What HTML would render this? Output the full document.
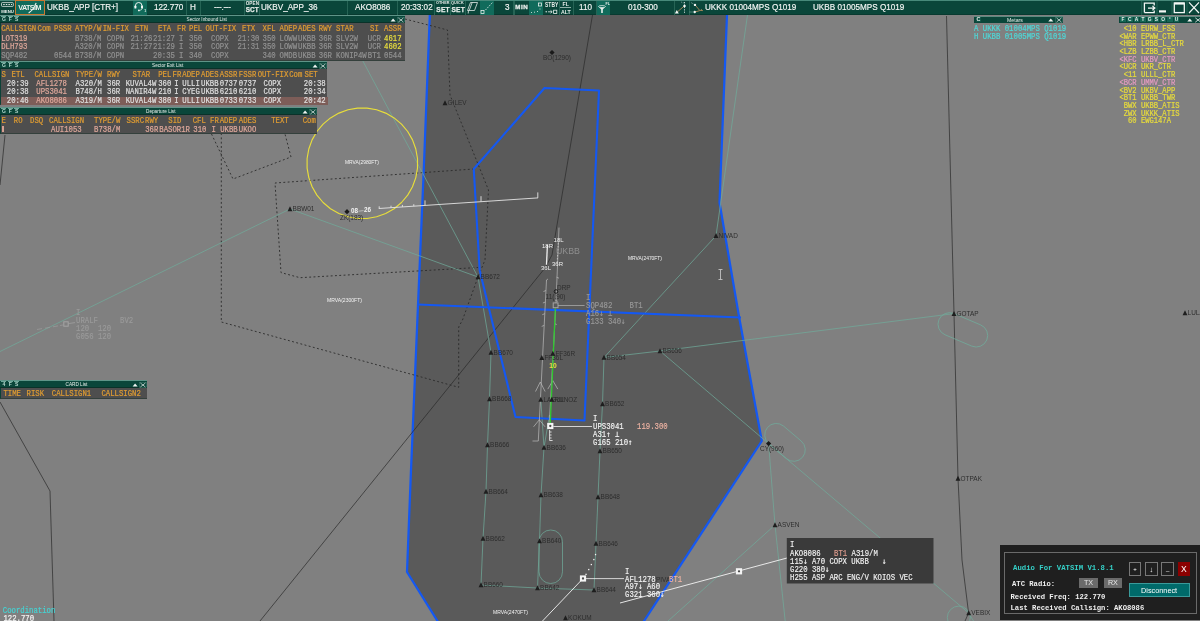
<!DOCTYPE html><html><head><meta charset="utf-8"><title>UKBB_APP radar</title><style>

html,body{margin:0;padding:0}
body{width:1200px;height:621px;overflow:hidden;position:relative;background:#808080;font-family:"Liberation Sans",Arial,sans-serif}
#root{position:absolute;left:0;top:0;width:1200px;height:621px;overflow:hidden;will-change:transform}
#map{position:absolute;left:0;top:0}
.abs{position:absolute}
.mono{font-family:"Liberation Mono","DejaVu Sans Mono",monospace;font-weight:normal;-webkit-text-stroke:.2px;font-size:7.3px;line-height:8px;white-space:pre;transform:scaleY(1.15);transform-origin:0 50%}
#top{position:absolute;left:0;top:0;width:1200px;height:15px;background:#0a463a;border-top:1px solid #47897a;box-sizing:border-box;border-bottom:1px solid #083a30}
#top .t{position:absolute;top:-.1px;height:12px;line-height:12px;color:#f2f5f3;font-size:9.8px;white-space:pre;transform-origin:0 50%;transform:scaleX(.83);-webkit-text-stroke:.2px #f2f5f3}
#top .sep{position:absolute;top:0;width:1.3px;height:14px;background:#266455}
#top .box{position:absolute;top:0;height:14px;background:#116b5b}
#top .sm{position:absolute;color:#e6ece9;font-weight:bold;font-size:5px;line-height:5px;white-space:pre}
.list{position:absolute;background:#4e4e4e;border-left:1px solid #0c4237;border-bottom:1.2px solid #34403c;box-sizing:border-box}
.list .tb{position:absolute;left:-1px;top:-1px;right:0;height:8px;background:#0a463a;border-top:1.6px solid #5f9488;border-bottom:1px solid #0a3229;box-sizing:border-box}
.list .ttl{position:absolute;top:.6px;height:6px;line-height:6px;font-size:4.7px;color:#e8eeea;white-space:pre}
.list .c{position:absolute;height:8px}
.hd{color:#df9c32}
.pk{color:#dda79a}
.gy{color:#909090}
.wh{color:#dedede}
.yl{color:#e6dc3e}

</style></head><body><div id="root">
<svg id="map" width="1200" height="621" viewBox="0 0 1200 621">
<rect width="1200" height="621" fill="#808080"/>
<polygon points="430,10 423.75,170 418,305 411,470 407,572 437.5,621 440,630 640,630 644,621 761.8,441 738.75,315 719.5,202.5 727.2,10" fill="#5a5a5a" stroke="#1458f2" stroke-width="2.25" stroke-linejoin="round"/>
<polyline points="405,19 447.5,30 450,95 480,169 488.5,190 485,260 478,277 462.5,320 458.7,327 458.7,387.3 221.3,322 221.3,134" fill="none" stroke="#2a2a2a" stroke-width="0.9" stroke-dasharray="1.9 2.4"/>
<polyline points="474,169 275,183 281,272.6 300,277.7 478,267.5" fill="none" stroke="#2a2a2a" stroke-width="0.9" stroke-dasharray="1.9 2.4"/>
<polyline points="211.5,134 233,179 291,157 285,134" fill="none" stroke="#2a2a2a" stroke-width="0.9" stroke-dasharray="1.9 2.4"/>
<polyline points="592.5,15 557,225 552,255 545,268 260,621" fill="none" stroke="#2a2a2a" stroke-width="0.7"/>
<polyline points="946.5,16 954,313.6 958,478.5 962,560 968.6,613 964.6,622" fill="none" stroke="#2a2a2a" stroke-width="0.7"/>
<polyline points="5,135 0,185" fill="none" stroke="#2a2a2a" stroke-width="0.7"/>
<polyline points="0,402 50,491 54,621" fill="none" stroke="#2a2a2a" stroke-width="0.7"/>
<polyline points="0,351.5 290,209 478,277" fill="none" stroke="#70ab9b" stroke-width="0.72"/>
<polyline points="341,20 478,277" fill="none" stroke="#70ab9b" stroke-width="0.72"/>
<polyline points="478,277 491,352.5 489.5,399 487.5,445 486,491.5 483,538.5 481,585 537.5,588 594,590 596,543.5 598,497 600,451 602.5,404 604,357.5 660,351" fill="none" stroke="#70ab9b" stroke-width="0.72"/>
<polyline points="537.5,588 539.5,541 541,495 544,447.5 540.8,399.5" fill="none" stroke="#70ab9b" stroke-width="0.72"/>
<polyline points="544,447.5 549.5,415" fill="none" stroke="#70ab9b" stroke-width="0.72"/>
<polyline points="747.5,15 716,235.8 604,357.5" fill="none" stroke="#70ab9b" stroke-width="0.72"/>
<polyline points="954,313.6 660,351 768.6,443.6" fill="none" stroke="#70ab9b" stroke-width="0.72"/>
<polyline points="768.6,443.6 775,525 785.3,622" fill="none" stroke="#70ab9b" stroke-width="0.72"/>
<polyline points="775,525 664.7,624" fill="none" stroke="#70ab9b" stroke-width="0.72"/>
<polyline points="768.6,443.6 968.7,613" fill="none" stroke="#70ab9b" stroke-width="0.72"/>
<rect x="539" y="530" width="23.5" height="53.5" rx="11.7" fill="none" stroke="#70ab9b" stroke-width="0.72"/>
<rect x="-11.5" y="0" width="52" height="23" rx="11.5" fill="none" stroke="#70ab9b" stroke-width="0.72" transform="translate(954,313.6) rotate(23)"/>
<rect x="-11.5" y="-23" width="46" height="23" rx="11.5" fill="none" stroke="#70ab9b" stroke-width="0.72" transform="translate(768.8,443.7) rotate(40.3)"/>
<circle cx="958.8" cy="617.6" r="11.5" fill="none" stroke="#70ab9b" stroke-width="0.72"/>
<line x1="968.6" y1="613" x2="973.5" y2="621" stroke="#70ab9b" stroke-width="0.72"/>
<polyline points="418,304.5 741,317.5" fill="none" stroke="#1458f2" stroke-width="2.1"/>
<polygon points="544.5,88 599,90.5 584.5,420.5 515.5,417 479.7,270.5 473.75,169" fill="none" stroke="#1458f2" stroke-width="2.1" stroke-linejoin="round"/>
<polygon points="417.5,168.1 415.8,177.6 412.5,186.7 407.7,195.1 401.5,202.5 394.1,208.7 385.7,213.5 376.6,216.8 367.1,218.5 357.5,218.5 348.0,216.8 338.9,213.5 330.5,208.7 323.1,202.5 316.9,195.1 312.1,186.7 308.8,177.6 307.1,168.1 307.1,158.5 308.8,149.0 312.1,139.9 316.9,131.5 323.1,124.1 330.5,117.9 338.9,113.1 348.0,109.8 357.5,108.1 367.1,108.1 376.6,109.8 385.7,113.1 394.1,117.9 401.5,124.1 407.7,131.5 412.5,139.9 415.8,149.0 417.5,158.5" fill="none" stroke="#e8de3a" stroke-width="1.15" stroke-linejoin="round"/>
<line x1="358.5" y1="211.2" x2="363.5" y2="210.6" stroke="#b8b8b8" stroke-width="1"/>
<g stroke="#e4e4e4" stroke-width="0.9" fill="none">
<polyline points="378.8,208.5 538,197.9"/>
<line x1="379.2" y1="208.5" x2="379.2" y2="206.3"/>
<line x1="391" y1="207.7" x2="391" y2="205.7"/>
<line x1="402.4" y1="206.9" x2="402.4" y2="204.9"/>
<line x1="413.8" y1="206.2" x2="413.8" y2="204.2"/>
<line x1="425" y1="205.4" x2="425" y2="200.4"/>
<line x1="481" y1="201.7" x2="481" y2="196.2"/>
<line x1="537.8" y1="197.9" x2="537.8" y2="192.4"/>
</g>
<g stroke="#bcbcbc" stroke-width="0.7" fill="none">
<polyline points="559,227.6 556,303"/>
<polyline points="555.6,310 549.3,422.7"/>
<polyline points="548,279 546.5,280 538.3,441 532.5,441"/>
<line x1="546.0" y1="290.5" x2="543.5" y2="291.5"/>
<line x1="545.4" y1="302" x2="542.9" y2="303"/>
<line x1="544.8" y1="313.7" x2="542.3" y2="314.7"/>
<line x1="544.2" y1="325.4" x2="541.7" y2="326.4"/>
<line x1="556.5" y1="277.2" x2="559.0" y2="278.2"/>
<line x1="555.4" y1="300.4" x2="557.9" y2="301.4"/>
<line x1="554.2" y1="323.5" x2="556.7" y2="324.5"/>
<polyline points="535.5,391.5 540.3,382 545.0999999999999,391.5"/>
<polyline points="547.8,389.1 552.8,380.6 557.8,389.1"/>
<polyline points="533.55,426.8 539.3,419.8 545.05,426.8"/>
</g>
<line x1="547.4" y1="245" x2="546.5" y2="264.8" stroke="#f0f0f0" stroke-width="1.3"/>
<line x1="558.3" y1="243" x2="557.2" y2="262" stroke="#d0d0d0" stroke-width="0.8" stroke-dasharray="1.5 1.5"/>
<line x1="555.3" y1="308.5" x2="550.3" y2="423" stroke="#2fc82f" stroke-width="1.3"/>
<g font-family="Liberation Sans, Arial, sans-serif" font-size="6.45" fill="#2d2d2d">
<polygon points="475.55,279.3 478,274.3 480.45,279.3" fill="#1e1e1e"/>
<text x="480.6" y="279.4">BB672</text>
<polygon points="488.55,354.8 491,349.8 493.45,354.8" fill="#1e1e1e"/>
<text x="493.6" y="354.9">BB670</text>
<polygon points="487.05,401.3 489.5,396.3 491.95,401.3" fill="#1e1e1e"/>
<text x="492.1" y="401.4">BB668</text>
<polygon points="485.05,447.3 487.5,442.3 489.95,447.3" fill="#1e1e1e"/>
<text x="490.1" y="447.4">BB666</text>
<polygon points="483.55,493.8 486,488.8 488.45,493.8" fill="#1e1e1e"/>
<text x="488.6" y="493.9">BB664</text>
<polygon points="480.55,540.8 483,535.8 485.45,540.8" fill="#1e1e1e"/>
<text x="485.6" y="540.9">BB662</text>
<polygon points="478.55,587.3 481,582.3 483.45,587.3" fill="#1e1e1e"/>
<text x="483.6" y="587.4">BB660</text>
<polygon points="535.05,590.3 537.5,585.3 539.95,590.3" fill="#1e1e1e"/>
<text x="540.1" y="590.4">BB642</text>
<polygon points="591.55,592.3 594,587.3 596.45,592.3" fill="#1e1e1e"/>
<text x="596.6" y="592.4">BB644</text>
<polygon points="593.55,545.8 596,540.8 598.45,545.8" fill="#1e1e1e"/>
<text x="598.6" y="545.9">BB646</text>
<polygon points="595.55,499.3 598,494.3 600.45,499.3" fill="#1e1e1e"/>
<text x="600.6" y="499.4">BB648</text>
<polygon points="597.55,453.3 600,448.3 602.45,453.3" fill="#1e1e1e"/>
<text x="602.6" y="453.4">BB650</text>
<polygon points="600.05,406.3 602.5,401.3 604.95,406.3" fill="#1e1e1e"/>
<text x="605.1" y="406.4">BB652</text>
<polygon points="601.55,359.8 604,354.8 606.45,359.8" fill="#1e1e1e"/>
<text x="606.6" y="359.9">BB654</text>
<polygon points="657.55,353.3 660,348.3 662.45,353.3" fill="#1e1e1e"/>
<text x="662.6" y="353.4">BB656</text>
<polygon points="537.05,543.3 539.5,538.3 541.95,543.3" fill="#1e1e1e"/>
<text x="542.1" y="543.4">BB640</text>
<polygon points="538.55,497.3 541,492.3 543.45,497.3" fill="#1e1e1e"/>
<text x="543.6" y="497.4">BB638</text>
<polygon points="541.55,449.8 544,444.8 546.45,449.8" fill="#1e1e1e"/>
<text x="546.6" y="449.9">BB636</text>
<polygon points="539.3499999999999,359.90000000000003 541.8,354.90000000000003 544.25,359.90000000000003" fill="#1e1e1e"/>
<text x="544.4" y="360.0">FF36L</text>
<polygon points="550.3499999999999,355.8 552.8,350.8 555.25,355.8" fill="#1e1e1e"/>
<text x="555.4" y="355.9">FF36R</text>
<polygon points="538.3499999999999,401.8 540.8,396.8 543.25,401.8" fill="#1e1e1e"/>
<text x="543.4" y="401.9">LAGUL</text>
<polygon points="549.3499999999999,401.8 551.8,396.8 554.25,401.8" fill="#1e1e1e"/>
<text x="554.4" y="401.9">RUNOZ</text>
<polygon points="563.05,620.3 565.5,615.3 567.95,620.3" fill="#1e1e1e"/>
<text x="568.1" y="620.4">KOKUM</text>
<polygon points="442.55,105.3 445,100.3 447.45,105.3" fill="#1e1e1e"/>
<text x="447.6" y="105.4">GILEV</text>
<polygon points="713.55,238.10000000000002 716,233.10000000000002 718.45,238.10000000000002" fill="#1e1e1e"/>
<text x="718.6" y="238.20000000000002">NIVAD</text>
<polygon points="287.55,211.3 290,206.3 292.45,211.3" fill="#1e1e1e"/>
<text x="292.6" y="211.4">BBW01</text>
<polygon points="951.55,315.90000000000003 954,310.90000000000003 956.45,315.90000000000003" fill="#1e1e1e"/>
<text x="956.6" y="316.0">GOTAP</text>
<polygon points="955.55,480.8 958,475.8 960.45,480.8" fill="#1e1e1e"/>
<text x="960.6" y="480.9">OTPAK</text>
<polygon points="772.55,527.3 775,522.3 777.45,527.3" fill="#1e1e1e"/>
<text x="777.6" y="527.4">ASVEN</text>
<polygon points="966.25,615.3 968.7,610.3 971.1500000000001,615.3" fill="#1e1e1e"/>
<text x="971.3000000000001" y="615.4">VEBIX</text>
<polygon points="1182.55,315.3 1185,310.3 1187.45,315.3" fill="#1e1e1e"/>
<text x="1187.6" y="315.4">LULA</text>
<polygon points="549.4,52.5 552,49.9 554.6,52.5 552,55.1" fill="#1a1a1a"/>
<text x="543" y="59.7">BO(1290)</text>
<polygon points="766.0,443.6 768.6,441.0 771.2,443.6 768.6,446.20000000000005" fill="#1a1a1a"/>
<text x="760" y="450.5">CY(960)</text>
<polygon points="344.4,211.7 347,209.1 349.6,211.7 347,214.29999999999998" fill="#1a1a1a"/>
<text x="340" y="219.5">ZK(183)</text>
<text x="557" y="290.3">DRP</text><text x="545.6" y="299">11(.90)</text>
<text x="656" y="582.3">PIVA</text>
<circle cx="556" cy="291.5" r="1.8" fill="none" stroke="#1e1e1e" stroke-width="1"/>
</g>
<g font-family="Liberation Sans, Arial, sans-serif" fill="#f2f2f2">
<text x="345" y="164" font-size="5" textLength="34" lengthAdjust="spacingAndGlyphs">MRVA(2980FT)</text>
<text x="327" y="302" font-size="5" textLength="35" lengthAdjust="spacingAndGlyphs">MRVA(2300FT)</text>
<text x="628" y="260" font-size="5" textLength="34" lengthAdjust="spacingAndGlyphs">MRVA(2470FT)</text>
<text x="493" y="614" font-size="5" textLength="35" lengthAdjust="spacingAndGlyphs">MRVA(2470FT)</text>
<text x="553.6" y="242.2" font-size="6">18L</text><text x="542" y="247.9" font-size="6">18R</text>
<text x="552" y="266.2" font-size="6">36R</text><text x="541" y="269.7" font-size="6">36L</text>
<text x="351" y="213.3" font-size="6.3" font-weight="bold">08</text><text x="364" y="212.3" font-size="6.3" font-weight="bold">26</text>
</g>
<text x="556" y="254.3" font-family="Liberation Sans, Arial, sans-serif" font-size="9" fill="#8f8f8f" textLength="24" lengthAdjust="spacingAndGlyphs">UKBB</text>
<text x="549.3" y="367.8" font-family="Liberation Sans, Arial, sans-serif" font-size="7" font-weight="bold" fill="#e8e040" textLength="7.4" lengthAdjust="spacingAndGlyphs">10</text>
<g stroke="#c2c2c2" stroke-width="0.9"><line x1="720.5" y1="269.5" x2="720.5" y2="279.5"/><line x1="718.5" y1="269.5" x2="722.5" y2="269.5"/><line x1="718.5" y1="279.5" x2="722.5" y2="279.5"/></g>
<g font-family="Liberation Mono, DejaVu Sans Mono, monospace" font-weight="normal" font-size="7.3" stroke-width=".13" style="white-space:pre">
<rect x="553.2" y="302.90000000000003" width="4.8" height="4.8" fill="none" stroke="#a4a4a4" stroke-width="1"/>
<line x1="558" y1="305.5" x2="584.6" y2="305.5" stroke="#a8a8a8" stroke-width="0.8"/>
<text xml:space="preserve" transform="translate(586,297) scale(1,1.15)" y="2.52" fill="#989898" stroke="#989898">I</text>
<text xml:space="preserve" transform="translate(586,305.5) scale(1,1.15)" y="2.52" fill="#989898" stroke="#989898">SQP482</text>
<text xml:space="preserve" transform="translate(586,313) scale(1,1.15)" y="2.52" fill="#989898" stroke="#989898">A16<tspan font-family="DejaVu Sans Mono">↓</tspan> ⊥</text>
<text xml:space="preserve" transform="translate(586,320.6) scale(1,1.15)" y="2.52" fill="#989898" stroke="#989898">G133 340<tspan font-family="DejaVu Sans Mono">↓</tspan></text>
<text transform="translate(629.5,305.5) scale(1,1.15)" y="2.52" fill="#989898" stroke="#989898">BT1</text>
<rect x="547.1999999999999" y="422.9" width="6.2" height="6.2" fill="#f4f4f4"/><circle cx="550.3" cy="426" r="1.15" fill="#4a4a4a"/>
<line x1="553.3" y1="426.5" x2="592" y2="426.5" stroke="#f4f4f4" stroke-width="0.8"/>
<path d="M549.6 430 V440.5 M549.6 432 h2 M549.6 435 h2 M549.6 438 h2 M549.6 440.5 h3" stroke="#f4f4f4" stroke-width="0.8" fill="none"/>
<text xml:space="preserve" transform="translate(593,418) scale(1,1.15)" y="2.52" fill="#f4f4f4" stroke="#f4f4f4">I</text>
<text xml:space="preserve" transform="translate(593,426) scale(1,1.15)" y="2.52" fill="#f4f4f4" stroke="#f4f4f4">UPS3041</text>
<text xml:space="preserve" transform="translate(593,434) scale(1,1.15)" y="2.52" fill="#f4f4f4" stroke="#f4f4f4">A31<tspan font-family="DejaVu Sans Mono">↑</tspan> ⊥</text>
<text xml:space="preserve" transform="translate(593,442) scale(1,1.15)" y="2.52" fill="#f4f4f4" stroke="#f4f4f4">G165 210<tspan font-family="DejaVu Sans Mono">↑</tspan></text>
<text transform="translate(637,426) scale(1,1.15)" y="2.52" fill="#f0b4a4" stroke="#f0b4a4">119.300</text>
<line x1="583" y1="578.5" x2="542.5" y2="621" stroke="#f4f4f4" stroke-width="0.9"/>
<rect x="579.9" y="575.4" width="6.2" height="6.2" fill="#f4f4f4"/><circle cx="583" cy="578.5" r="1.15" fill="#4a4a4a"/>
<line x1="586" y1="578.6" x2="624" y2="578.6" stroke="#f4f4f4" stroke-width="0.8"/>
<rect x="585.4" y="573.6999999999999" width="1.3" height="1.3" fill="#f4f4f4"/>
<rect x="588.1" y="568.9" width="1.3" height="1.3" fill="#f4f4f4"/>
<rect x="590.6999999999999" y="563.9" width="1.3" height="1.3" fill="#f4f4f4"/>
<rect x="593.1999999999999" y="558.9" width="1.3" height="1.3" fill="#f4f4f4"/>
<rect x="594.9" y="553.9" width="1.3" height="1.3" fill="#f4f4f4"/>
<text xml:space="preserve" transform="translate(625,570.6) scale(1,1.15)" y="2.52" fill="#f4f4f4" stroke="#f4f4f4">I</text>
<text xml:space="preserve" transform="translate(625,579) scale(1,1.15)" y="2.52" fill="#f4f4f4" stroke="#f4f4f4">AFL1278</text>
<text xml:space="preserve" transform="translate(625,586) scale(1,1.15)" y="2.52" fill="#f4f4f4" stroke="#f4f4f4">A97<tspan font-family="DejaVu Sans Mono">↓</tspan> A60</text>
<text xml:space="preserve" transform="translate(625,594) scale(1,1.15)" y="2.52" fill="#f4f4f4" stroke="#f4f4f4">G321 360<tspan font-family="DejaVu Sans Mono">↓</tspan></text>
<text transform="translate(669,579) scale(1,1.15)" y="2.52" fill="#f0b4a4" stroke="#f0b4a4">BT1</text>
<line x1="620" y1="603" x2="787" y2="558" stroke="#f4f4f4" stroke-width="0.9"/>
<rect x="735.9" y="568.1999999999999" width="6.2" height="6.2" fill="#f4f4f4"/><circle cx="739" cy="571.3" r="1.15" fill="#4a4a4a"/>
<rect x="786.8" y="538" width="146.7" height="45.5" fill="#3a3a3a"/>
<text xml:space="preserve" transform="translate(790,544.5) scale(1,1.15)" y="2.52" fill="#f4f4f4" stroke="#f4f4f4">I</text>
<text xml:space="preserve" transform="translate(790,553) scale(1,1.15)" y="2.52" fill="#f4f4f4" stroke="#f4f4f4">AKO8086</text>
<text xml:space="preserve" transform="translate(790,561) scale(1,1.15)" y="2.52" fill="#f4f4f4" stroke="#f4f4f4">115<tspan font-family="DejaVu Sans Mono">↓</tspan> A70 COPX UKBB   <tspan font-family="DejaVu Sans Mono">↓</tspan></text>
<text xml:space="preserve" transform="translate(790,569) scale(1,1.15)" y="2.52" fill="#f4f4f4" stroke="#f4f4f4">G220 380<tspan font-family="DejaVu Sans Mono">↓</tspan></text>
<text xml:space="preserve" transform="translate(790,577) scale(1,1.15)" y="2.52" fill="#f4f4f4" stroke="#f4f4f4">H255 ASP ARC ENG/V KOIOS VEC</text>
<text transform="translate(834,553) scale(1,1.15)" y="2.52" fill="#e09e90" stroke="#e09e90">BT1</text>
<text transform="translate(851.5,553) scale(1,1.15)" y="2.52" fill="#f4f4f4" stroke="#f4f4f4">A319/M</text>
<rect x="63.8" y="321.8" width="4.4" height="4.4" fill="none" stroke="#a4a4a4" stroke-width="1"/>
<line x1="68.5" y1="323.6" x2="75" y2="322.6" stroke="#a4a4a4" stroke-width="0.7"/>
<path d="M37 329.5 l5 -0.9 M45 328.2 l5 -0.9 M53 326.8 l5 -0.9 M60 325.5 l3 -0.5" stroke="#9c9c9c" stroke-width="0.7"/>
<text xml:space="preserve" transform="translate(76,312) scale(1,1.15)" y="2.52" fill="#9a9a9a" stroke="#9a9a9a">I</text>
<text xml:space="preserve" transform="translate(76,320) scale(1,1.15)" y="2.52" fill="#9a9a9a" stroke="#9a9a9a">URALF</text>
<text xml:space="preserve" transform="translate(76,328) scale(1,1.15)" y="2.52" fill="#9a9a9a" stroke="#9a9a9a">120  120</text>
<text xml:space="preserve" transform="translate(76,336) scale(1,1.15)" y="2.52" fill="#9a9a9a" stroke="#9a9a9a">G056 120</text>
<text transform="translate(120,320) scale(1,1.15)" y="2.52" fill="#9a9a9a" stroke="#9a9a9a">BV2</text>
</g></svg>
<div id="top">
<svg class="abs" style="left:0;top:0" width="16" height="14" viewBox="0 0 16 14"><rect x="1.5" y="1.6" width="11.8" height="3.8" rx=".8" fill="none" stroke="#dfe8e4" stroke-width="0.8"/><path d="M3.2 3.5h1.5M5.8 3.5h1.5M8.4 3.5h1.5M11 3.5h1" stroke="#dfe8e4" stroke-width="1.1"/></svg>
<span class="sm" style="left:1.2px;top:8.5px;font-size:4.3px;line-height:4.3px;letter-spacing:0px">MENU</span>
<span class="box" style="left:15px;width:30px;border:1px solid #c87832;box-sizing:border-box;height:15.2px;top:-1px"></span>
<span class="abs" style="left:18.2px;top:1.5px;height:10px;line-height:10px;color:#eef3f0;font-size:7.2px;font-weight:bold;letter-spacing:-.55px;white-space:pre">VATSIM</span>
<svg class="abs" style="left:15px;top:0" width="30" height="14" viewBox="0 0 30 14"><path d="M14 11.8 Q17.5 9.5 19.5 5.5 Q20.2 3.6 21 2.4" fill="none" stroke="#eef3f0" stroke-width="1.1" stroke-linecap="round"/><path d="M17.8 6.2 L19.6 4.6" stroke="#10705f" stroke-width=".7"/></svg>
<span class="t" style="left:46.5px;">UKBB_APP [CTR+]</span>
<span class="box" style="left:133px;width:14px;"></span>
<svg class="abs" style="left:133px;top:0" width="15" height="14" viewBox="0 0 15 14"><path d="M2.4 6.2 V4.8 A3.3 3.3 0 0 1 9 4.8 V6.2" fill="none" stroke="#eef3f0" stroke-width="1"/><rect x="1.4" y="4.6" width="2" height="3" rx=".7" fill="#f4f7f5"/><rect x="8" y="4.6" width="2" height="3" rx=".7" fill="#f4f7f5"/><path d="M9.2 7.4 Q8.8 9.2 6.4 9.4" fill="none" stroke="#eef3f0" stroke-width=".7"/><circle cx="5.9" cy="9.4" r=".9" fill="#f4f7f5"/></svg>
<span class="sm" style="left:144.3px;top:9.2px;font-size:3.6px;line-height:3.6px;">1</span>
<span class="t" style="left:153.5px;">122.770</span>
<span class="sep" style="left:185.5px"></span>
<span class="t" style="left:190px;">H</span>
<span class="sep" style="left:200px"></span>
<span class="t" style="left:214px;letter-spacing:-.3px">---.---</span>
<span class="sep" style="left:243.5px"></span>
<span class="sm" style="left:245.7px;top:1.2px;font-size:4.6px;line-height:4.6px;letter-spacing:.1px">OPEN</span>
<span class="sm" style="left:245.7px;top:6.3px;font-size:6.4px;line-height:6.4px;letter-spacing:.1px;-webkit-text-stroke:.25px">SCT</span>
<span class="sep" style="left:259px"></span>
<span class="t" style="left:260.5px;">UKBV_APP_36</span>
<span class="sep" style="left:346.5px"></span>
<span class="t" style="left:355px;">AKO8086</span>
<span class="sep" style="left:396.5px"></span>
<span class="t" style="left:401px;">20:33:02</span>
<span class="sep" style="left:433.8px"></span>
<span class="sm" style="left:435.9px;top:1.2px;font-size:3.8px;line-height:3.8px;letter-spacing:.1px">OTHER</span>
<span class="sm" style="left:436.3px;top:6.1px;font-size:6.6px;line-height:6.6px;letter-spacing:.2px;-webkit-text-stroke:.25px">SET</span>
<span class="sep" style="left:449.5px"></span>
<span class="sm" style="left:451px;top:1.2px;font-size:3.8px;line-height:3.8px;letter-spacing:.1px">QUICK</span>
<span class="sm" style="left:451.5px;top:6.1px;font-size:6.6px;line-height:6.6px;letter-spacing:.2px;-webkit-text-stroke:.25px">SET</span>
<span class="sep" style="left:464.8px"></span>
<svg class="abs" style="left:466px;top:0" width="14" height="14" viewBox="0 0 14 14"><path d="M4.5 1.5 L11.5 1.5 L8.5 9.5 L1.5 9.5 Z M6.2 1.5 L3.2 9.5 M2.5 9.5 L2.2 12.5" fill="none" stroke="#e2ebe7" stroke-width=".8"/></svg>
<span class="box" style="left:480px;width:14px;"></span>
<svg class="abs" style="left:480px;top:0" width="14" height="14" viewBox="0 0 14 14"><rect x="1" y="9.5" width="3" height="3" fill="none" stroke="#e8efec" stroke-width=".8"/><path d="M5.5 9 L12.5 1.5" stroke="#e8efec" stroke-width=".8" stroke-dasharray="1.6 1.2"/></svg>
<span class="t" style="left:504.6px;">3</span>
<span class="sep" style="left:513.4px"></span>
<span class="sm" style="left:515.3px;top:3.2px;font-size:6.2px;line-height:6.2px;letter-spacing:.5px;-webkit-text-stroke:.3px">MIN</span>
<span class="box" style="left:529px;width:14px;"></span>
<svg class="abs" style="left:529px;top:0" width="14" height="14" viewBox="0 0 14 14"><rect x="9.5" y="2" width="3" height="3" fill="none" stroke="#e8efec" stroke-width=".8"/><path d="M2 11.5h1M5 11.2h1M8 10.5h1M10.5 8h1" stroke="#e8efec" stroke-width=".8"/></svg>
<span class="sm" style="left:545.2px;top:0.5px;font-size:6.6px;line-height:6.6px;letter-spacing:.1px;transform:scaleX(.74);transform-origin:0 0">STBY</span>
<svg class="abs" style="left:545px;top:7.5px" width="13" height="6" viewBox="0 0 13 6"><circle cx="1.2" cy="2.8" r=".7" fill="#e8efec"/><path d="M3 2.8H7 M5.6 1.4 L7.2 2.8 L5.6 4.2" stroke="#e8efec" stroke-width=".8" fill="none"/><rect x="8.6" y="1.2" width="3.2" height="3.2" fill="none" stroke="#e8efec" stroke-width=".8"/></svg>
<span class="sep" style="left:558.7px"></span>
<span class="sm" style="left:562.5px;top:1px;font-size:5.2px;line-height:5.2px;">FL</span>
<span class="abs" style="left:560.3px;top:6.1px;width:10.4px;height:1.1px;background:#8fb0a7"></span>
<span class="sm" style="left:561px;top:8.8px;font-size:5.2px;line-height:5.2px;">ALT</span>
<span class="sep" style="left:573px"></span>
<span class="t" style="left:578.8px;">110</span>
<span class="sep" style="left:595.7px"></span>
<span class="box" style="left:597px;width:13px;"></span>
<svg class="abs" style="left:597px;top:0" width="13" height="14" viewBox="0 0 13 14"><path d="M1.5 5.5 H8.5 L5.8 8.5 V12 H4.2 V8.5 Z" fill="#e8efec"/><ellipse cx="5" cy="5.5" rx="3.5" ry="1" fill="#10705f" stroke="#e8efec" stroke-width=".7"/></svg>
<span class="sm" style="left:605.5px;top:2px;font-size:3.6px;line-height:3.6px;">FL</span>
<span class="t" style="left:628px;">010-300</span>
<span class="sep" style="left:673.5px"></span>
<svg class="abs" style="left:674px;top:0" width="14" height="14" viewBox="0 0 14 14"><path d="M3.5 10.8 L10 5.2" stroke="#b08a5a" stroke-width=".9"/><path d="M10.5 1 V12.5" stroke="#e8efec" stroke-width=".8" stroke-dasharray="1.3 1.1"/><path d="M7.2 1.2h.8M8.8 1.8h.8" stroke="#cfe0da" stroke-width=".6"/><path d="M.9 12.6 L2.8 8.9 L4.8 12.6Z" fill="#f4f7f5"/><circle cx="10.5" cy="4.9" r="1.25" fill="#f4f7f5"/></svg>
<span class="sep" style="left:688.6px"></span>
<svg class="abs" style="left:689px;top:0" width="15" height="14" viewBox="0 0 15 14"><path d="M6 3.9 L10.6 9.3 L13.6 9.6 M6 11 L10.8 9.6 M12 8.3 L13.6 9.6" stroke="#b08a5a" stroke-width=".9" fill="none"/><path d="M2 1.5 L5 3.4" stroke="#cfe0da" stroke-width=".6" stroke-dasharray=".8 .8"/><path d="M0.5 11 H4.5" stroke="#9bb8b0" stroke-width=".7" stroke-dasharray="1.2 .7"/><circle cx="6" cy="3.9" r="1.2" fill="#f4f7f5"/><circle cx="5.7" cy="11" r="1.2" fill="#f4f7f5"/></svg>
<span class="t" style="left:704.6px;">UKKK 01004MPS Q1019</span>
<span class="t" style="left:812.7px;">UKBB 01005MPS Q1019</span>
<svg class="abs" style="left:1140px;top:0" width="60" height="14" viewBox="0 0 60 14"><g fill="none" stroke="#f4f7f5" stroke-width="1.3"><path d="M4.4 11.6 V2.2 H14.2 V4.6 M14.2 9.6 V11.6 H4.4"/><path d="M8 7.1 H14.6 M12.4 4.9 L14.9 7.1 L12.4 9.3" stroke-width="1.2"/><path d="M19 10.4 H26" stroke-width="2.2"/><rect x="34.3" y="2" width="10" height="9.6"/><path d="M34.3 2.6H44.3" stroke-width="2"/><path d="M49 1.4 L59 12 M59 1.4 L49 12" stroke-width="1.2"/></g><path d="M1.7 0V14M17 0V14M32 0V14M47 0V14" stroke="#2a6a5c" stroke-width=".8"/></svg>
</div>
<div class="list" style="left:0px;top:16px;width:405px;height:44.8px">
<div class="tb"></div>
<span class="abs" style="left:0.20px;top:.3px;width:5.3px;height:5.6px;border-top:.8px solid #6fa99b;box-sizing:border-box;font-size:5px;line-height:5px;color:#b4d6cd;font-weight:bold;text-align:center">G</span>
<span class="abs" style="left:6.65px;top:.3px;width:5.3px;height:5.6px;border-top:.8px solid #6fa99b;box-sizing:border-box;font-size:5px;line-height:5px;color:#b4d6cd;font-weight:bold;text-align:center">F</span>
<span class="abs" style="left:13.10px;top:.3px;width:5.3px;height:5.6px;border-top:.8px solid #6fa99b;box-sizing:border-box;font-size:5px;line-height:5px;color:#b4d6cd;font-weight:bold;text-align:center">S</span>
<span class="ttl" style="left:185.5px">Sector Inbound List</span>
<svg class="abs" style="left:386px;top:0" width="18" height="7" viewBox="0 0 18 7"><path d="M3.6 5.6 L6.1 2.4 L8.6 5.6Z" fill="#f0f4f2"/><rect x="10.5" y="1.3" width="6.8" height="5.4" fill="none" stroke="#3f7a6d" stroke-width=".5"/><path d="M11.4 2 L16.4 6 M16.4 2 L11.4 6" stroke="#f0f4f2" stroke-width=".7"/></svg>
<span class="c mono hd" style="left:0.2px;top:9.4px">CALLSIGN</span>
<span class="c mono hd" style="left:36.5px;top:9.4px">Com</span>
<span class="c mono hd" style="left:53.0px;top:9.4px">PSSR</span>
<span class="c mono hd" style="left:74.0px;top:9.4px">ATYP/W</span>
<span class="c mono hd" style="left:101.7px;top:9.4px">IN-FIX</span>
<span class="c mono hd" style="left:134.0px;top:9.4px">ETN</span>
<span class="c mono hd" style="left:157.0px;top:9.4px">ETA</span>
<span class="c mono hd" style="left:176.0px;top:9.4px">FR</span>
<span class="c mono hd" style="left:188.0px;top:9.4px">PEL</span>
<span class="c mono hd" style="left:204.5px;top:9.4px">OUT-FIX</span>
<span class="c mono hd" style="left:241.0px;top:9.4px">ETX</span>
<span class="c mono hd" style="left:261.5px;top:9.4px">XFL</span>
<span class="c mono hd" style="left:278.5px;top:9.4px">ADEP</span>
<span class="c mono hd" style="left:297.0px;top:9.4px">ADES</span>
<span class="c mono hd" style="left:317.8px;top:9.4px">RWY</span>
<span class="c mono hd" style="left:335.0px;top:9.4px">STAR</span>
<span class="c mono hd" style="left:369.0px;top:9.4px">SI</span>
<span class="c mono hd" style="left:383.0px;top:9.4px">ASSR</span>
<span class="c mono pk" style="left:0.2px;top:18.9px">LOT319</span>
<span class="c mono gy" style="left:74.0px;top:18.9px">B738/M</span>
<span class="c mono gy" style="left:105.7px;top:18.9px">COPN</span>
<span class="c mono gy" style="left:129.5px;top:18.9px">21:26</span>
<span class="c mono gy" style="left:152.0px;top:18.9px">21:27</span>
<span class="c mono gy" style="left:178.0px;top:18.9px">I</span>
<span class="c mono gy" style="left:188.0px;top:18.9px">350</span>
<span class="c mono gy" style="left:210.0px;top:18.9px">COPX</span>
<span class="c mono gy" style="left:236.5px;top:18.9px">21:30</span>
<span class="c mono gy" style="left:261.5px;top:18.9px">350</span>
<span class="c mono gy" style="left:278.5px;top:18.9px">LOWW</span>
<span class="c mono gy" style="left:297.0px;top:18.9px">UKBB</span>
<span class="c mono gy" style="left:317.8px;top:18.9px">36R</span>
<span class="c mono gy" style="left:335.0px;top:18.9px">SLV2W</span>
<span class="c mono gy" style="left:366.8px;top:18.9px">UCR</span>
<span class="c mono yl" style="left:383.0px;top:18.9px">4617</span>
<span class="c mono pk" style="left:0.2px;top:26.9px">DLH793</span>
<span class="c mono gy" style="left:74.0px;top:26.9px">A320/M</span>
<span class="c mono gy" style="left:105.7px;top:26.9px">COPN</span>
<span class="c mono gy" style="left:129.5px;top:26.9px">21:27</span>
<span class="c mono gy" style="left:152.0px;top:26.9px">21:29</span>
<span class="c mono gy" style="left:178.0px;top:26.9px">I</span>
<span class="c mono gy" style="left:188.0px;top:26.9px">350</span>
<span class="c mono gy" style="left:210.0px;top:26.9px">COPX</span>
<span class="c mono gy" style="left:236.5px;top:26.9px">21:31</span>
<span class="c mono gy" style="left:261.5px;top:26.9px">350</span>
<span class="c mono gy" style="left:278.5px;top:26.9px">LOWW</span>
<span class="c mono gy" style="left:297.0px;top:26.9px">UKBB</span>
<span class="c mono gy" style="left:317.8px;top:26.9px">36R</span>
<span class="c mono gy" style="left:335.0px;top:26.9px">SLV2W</span>
<span class="c mono gy" style="left:366.8px;top:26.9px">UCR</span>
<span class="c mono yl" style="left:383.0px;top:26.9px">4602</span>
<span class="c mono gy" style="left:0.2px;top:35.8px">SQP482</span>
<span class="c mono gy" style="left:53.0px;top:35.8px">0544</span>
<span class="c mono gy" style="left:74.0px;top:35.8px">B738/M</span>
<span class="c mono gy" style="left:105.7px;top:35.8px">COPN</span>
<span class="c mono gy" style="left:152.0px;top:35.8px">20:35</span>
<span class="c mono gy" style="left:178.0px;top:35.8px">I</span>
<span class="c mono gy" style="left:188.0px;top:35.8px">340</span>
<span class="c mono gy" style="left:210.0px;top:35.8px">COPX</span>
<span class="c mono gy" style="left:261.5px;top:35.8px">340</span>
<span class="c mono gy" style="left:278.5px;top:35.8px">OMDB</span>
<span class="c mono gy" style="left:297.0px;top:35.8px">UKBB</span>
<span class="c mono gy" style="left:317.8px;top:35.8px">36R</span>
<span class="c mono gy" style="left:335.0px;top:35.8px">KONIP4W</span>
<span class="c mono gy" style="left:366.8px;top:35.8px">BT1</span>
<span class="c mono gy" style="left:383.0px;top:35.8px">0544</span>
</div>
<div class="list" style="left:0px;top:62px;width:326.5px;height:43px">
<div class="abs" style="left:0;top:34.5px;width:326.5px;height:8.2px;background:#7d5d58"></div>
<div class="tb"></div>
<span class="abs" style="left:0.20px;top:.3px;width:5.3px;height:5.6px;border-top:.8px solid #6fa99b;box-sizing:border-box;font-size:5px;line-height:5px;color:#b4d6cd;font-weight:bold;text-align:center">G</span>
<span class="abs" style="left:6.65px;top:.3px;width:5.3px;height:5.6px;border-top:.8px solid #6fa99b;box-sizing:border-box;font-size:5px;line-height:5px;color:#b4d6cd;font-weight:bold;text-align:center">F</span>
<span class="abs" style="left:13.10px;top:.3px;width:5.3px;height:5.6px;border-top:.8px solid #6fa99b;box-sizing:border-box;font-size:5px;line-height:5px;color:#b4d6cd;font-weight:bold;text-align:center">S</span>
<span class="ttl" style="left:151px">Sector Exit List</span>
<svg class="abs" style="left:307.5px;top:0" width="18" height="7" viewBox="0 0 18 7"><path d="M3.6 5.6 L6.1 2.4 L8.6 5.6Z" fill="#f0f4f2"/><rect x="10.5" y="1.3" width="6.8" height="5.4" fill="none" stroke="#3f7a6d" stroke-width=".5"/><path d="M11.4 2 L16.4 6 M16.4 2 L11.4 6" stroke="#f0f4f2" stroke-width=".7"/></svg>
<span class="c mono hd" style="left:0.4px;top:9.4px">S</span>
<span class="c mono hd" style="left:10.5px;top:9.4px">ETL</span>
<span class="c mono hd" style="left:33.4px;top:9.4px">CALLSIGN</span>
<span class="c mono hd" style="left:74.6px;top:9.4px">TYPE/W</span>
<span class="c mono hd" style="left:106.0px;top:9.4px">RWY</span>
<span class="c mono hd" style="left:131.5px;top:9.4px">STAR</span>
<span class="c mono hd" style="left:157.2px;top:9.4px">PEL</span>
<span class="c mono hd" style="left:171.6px;top:9.4px">FR</span>
<span class="c mono hd" style="left:181.3px;top:9.4px">ADEP</span>
<span class="c mono hd" style="left:200.0px;top:9.4px">ADES</span>
<span class="c mono hd" style="left:218.8px;top:9.4px">ASSR</span>
<span class="c mono hd" style="left:237.8px;top:9.4px">FSSR</span>
<span class="c mono hd" style="left:256.7px;top:9.4px">OUT-FIX</span>
<span class="c mono hd" style="left:288.2px;top:9.4px">Com</span>
<span class="c mono hd" style="left:303.5px;top:9.4px">SET</span>
<span class="c mono wh" style="left:5.8px;top:17.6px">20:39</span>
<span class="c mono pk" style="left:35.3px;top:17.6px">AFL1278</span>
<span class="c mono wh" style="left:74.6px;top:17.6px">A320/M</span>
<span class="c mono wh" style="left:106.0px;top:17.6px">36R</span>
<span class="c mono wh" style="left:124.7px;top:17.6px">KUVAL4W</span>
<span class="c mono wh" style="left:157.2px;top:17.6px">360</span>
<span class="c mono wh" style="left:173.2px;top:17.6px">I</span>
<span class="c mono wh" style="left:181.3px;top:17.6px">ULLI</span>
<span class="c mono wh" style="left:200.0px;top:17.6px">UKBB</span>
<span class="c mono wh" style="left:218.8px;top:17.6px">0737</span>
<span class="c mono wh" style="left:237.8px;top:17.6px">0737</span>
<span class="c mono wh" style="left:262.5px;top:17.6px">COPX</span>
<span class="c mono wh" style="left:302.8px;top:17.6px">20:38</span>
<span class="c mono wh" style="left:5.8px;top:26px">20:38</span>
<span class="c mono pk" style="left:35.3px;top:26px">UPS3041</span>
<span class="c mono wh" style="left:74.6px;top:26px">B748/H</span>
<span class="c mono wh" style="left:106.0px;top:26px">36R</span>
<span class="c mono wh" style="left:124.7px;top:26px">NANIR4W</span>
<span class="c mono wh" style="left:157.2px;top:26px">210</span>
<span class="c mono wh" style="left:173.2px;top:26px">I</span>
<span class="c mono wh" style="left:181.3px;top:26px">CYEG</span>
<span class="c mono wh" style="left:200.0px;top:26px">UKBB</span>
<span class="c mono wh" style="left:218.8px;top:26px">6210</span>
<span class="c mono wh" style="left:237.8px;top:26px">6210</span>
<span class="c mono wh" style="left:262.5px;top:26px">COPX</span>
<span class="c mono wh" style="left:302.8px;top:26px">20:34</span>
<span class="c mono wh" style="left:5.8px;top:34.6px">20:46</span>
<span class="c mono pk" style="left:35.3px;top:34.6px">AKO8086</span>
<span class="c mono wh" style="left:74.6px;top:34.6px">A319/M</span>
<span class="c mono wh" style="left:106.0px;top:34.6px">36R</span>
<span class="c mono wh" style="left:124.7px;top:34.6px">KUVAL4W</span>
<span class="c mono wh" style="left:157.2px;top:34.6px">380</span>
<span class="c mono wh" style="left:173.2px;top:34.6px">I</span>
<span class="c mono wh" style="left:181.3px;top:34.6px">ULLI</span>
<span class="c mono wh" style="left:200.0px;top:34.6px">UKBB</span>
<span class="c mono wh" style="left:218.8px;top:34.6px">0733</span>
<span class="c mono wh" style="left:237.8px;top:34.6px">0733</span>
<span class="c mono wh" style="left:262.5px;top:34.6px">COPX</span>
<span class="c mono wh" style="left:302.8px;top:34.6px">20:42</span>
</div>
<div class="list" style="left:0px;top:108px;width:316.5px;height:26px">
<div class="tb"></div>
<span class="abs" style="left:0.20px;top:.3px;width:5.3px;height:5.6px;border-top:.8px solid #6fa99b;box-sizing:border-box;font-size:5px;line-height:5px;color:#b4d6cd;font-weight:bold;text-align:center">G</span>
<span class="abs" style="left:6.65px;top:.3px;width:5.3px;height:5.6px;border-top:.8px solid #6fa99b;box-sizing:border-box;font-size:5px;line-height:5px;color:#b4d6cd;font-weight:bold;text-align:center">F</span>
<span class="abs" style="left:13.10px;top:.3px;width:5.3px;height:5.6px;border-top:.8px solid #6fa99b;box-sizing:border-box;font-size:5px;line-height:5px;color:#b4d6cd;font-weight:bold;text-align:center">S</span>
<span class="ttl" style="left:145px">Departure List</span>
<svg class="abs" style="left:297.5px;top:0" width="18" height="7" viewBox="0 0 18 7"><path d="M3.6 5.6 L6.1 2.4 L8.6 5.6Z" fill="#f0f4f2"/><rect x="10.5" y="1.3" width="6.8" height="5.4" fill="none" stroke="#3f7a6d" stroke-width=".5"/><path d="M11.4 2 L16.4 6 M16.4 2 L11.4 6" stroke="#f0f4f2" stroke-width=".7"/></svg>
<span class="c mono hd" style="left:0.4px;top:9.4px">E</span>
<span class="c mono hd" style="left:12.8px;top:9.4px">RO</span>
<span class="c mono hd" style="left:29.0px;top:9.4px">DSQ</span>
<span class="c mono hd" style="left:48.0px;top:9.4px">CALLSIGN</span>
<span class="c mono hd" style="left:93.0px;top:9.4px">TYPE/W</span>
<span class="c mono hd" style="left:125.5px;top:9.4px">SSRC</span>
<span class="c mono hd" style="left:144.0px;top:9.4px">RWY</span>
<span class="c mono hd" style="left:167.3px;top:9.4px">SID</span>
<span class="c mono hd" style="left:191.7px;top:9.4px">CFL</span>
<span class="c mono hd" style="left:209.0px;top:9.4px">FR</span>
<span class="c mono hd" style="left:218.7px;top:9.4px">ADEP</span>
<span class="c mono hd" style="left:237.8px;top:9.4px">ADES</span>
<span class="c mono hd" style="left:270.2px;top:9.4px">TEXT</span>
<span class="c mono hd" style="left:301.7px;top:9.4px">Com</span>
<span class="c mono pk" style="left:50.0px;top:17.8px">AUI1053</span>
<span class="c mono pk" style="left:93.0px;top:17.8px">B738/M</span>
<span class="c mono pk" style="left:144.2px;top:17.8px">36R</span>
<span class="c mono pk" style="left:158.3px;top:17.8px">BASOR1R</span>
<span class="c mono pk" style="left:192.3px;top:17.8px">310</span>
<span class="c mono pk" style="left:210.5px;top:17.8px">I</span>
<span class="c mono pk" style="left:219.2px;top:17.8px">UKBB</span>
<span class="c mono pk" style="left:237.8px;top:17.8px">UKOO</span>
</div>
<span class="abs" style="left:1.6px;top:126.4px;width:2.8px;height:5.4px;border:.7px solid #d6a092;box-sizing:border-box"></span>
<div class="list" style="left:0px;top:381px;width:146.5px;height:18px">
<div class="tb"></div>
<span class="abs" style="left:0.20px;top:.3px;width:5.3px;height:5.6px;border-top:.8px solid #6fa99b;box-sizing:border-box;font-size:5px;line-height:5px;color:#b4d6cd;font-weight:bold;text-align:center">4</span>
<span class="abs" style="left:6.65px;top:.3px;width:5.3px;height:5.6px;border-top:.8px solid #6fa99b;box-sizing:border-box;font-size:5px;line-height:5px;color:#b4d6cd;font-weight:bold;text-align:center">F</span>
<span class="abs" style="left:13.10px;top:.3px;width:5.3px;height:5.6px;border-top:.8px solid #6fa99b;box-sizing:border-box;font-size:5px;line-height:5px;color:#b4d6cd;font-weight:bold;text-align:center">S</span>
<span class="ttl" style="left:64.5px">CARD List</span>
<svg class="abs" style="left:127.5px;top:0" width="18" height="7" viewBox="0 0 18 7"><path d="M3.6 5.6 L6.1 2.4 L8.6 5.6Z" fill="#f0f4f2"/><rect x="10.5" y="1.3" width="6.8" height="5.4" fill="none" stroke="#3f7a6d" stroke-width=".5"/><path d="M11.4 2 L16.4 6 M16.4 2 L11.4 6" stroke="#f0f4f2" stroke-width=".7"/></svg>
<span class="c mono hd" style="left:2.4px;top:9.4px">TIME</span>
<span class="c mono hd" style="left:25.6px;top:9.4px">RISK</span>
<span class="c mono hd" style="left:50.8px;top:9.4px">CALLSIGN1</span>
<span class="c mono hd" style="left:100.4px;top:9.4px">CALLSIGN2</span>
</div>
<div class="abs" style="left:974px;top:16px;width:88.5px;height:7px;background:#0a463a;border-top:1px solid #5f8a80;box-sizing:border-box"></div>
<span class="abs" style="left:975.6px;top:16.6px;width:5.5px;height:5.6px;background:#0f5447;font-size:5.4px;line-height:5.8px;color:#e8eeea;font-weight:bold;text-align:center">C</span>
<span class="abs" style="left:1007px;top:16.5px;font-size:5.2px;line-height:6px;color:#e8eeea">Metars</span>
<svg class="abs" style="left:1046.5px;top:16px" width="18" height="7" viewBox="0 0 18 7"><path d="M1.3 5.6 L3.8 2.4 L6.3 5.6Z" fill="#f0f4f2"/><rect x="8.5" y="1.3" width="7" height="5.4" fill="none" stroke="#3f7a6d" stroke-width=".5"/><path d="M9.6 2 L14.4 6 M14.4 2 L9.6 6" stroke="#f0f4f2" stroke-width=".7"/></svg>
<span class="abs mono" style="left:974px;top:24.9px;color:#4fd6d6;font-size:7.32px">A UKKK 01004MPS Q1019</span>
<span class="abs mono" style="left:974px;top:32.7px;color:#4fd6d6;font-size:7.32px">H UKBB 01005MPS Q1019</span>
<div class="abs" style="left:1118.5px;top:16px;width:82px;height:7px;background:#0a463a;border-top:1px solid #5f8a80;box-sizing:border-box"></div>
<span class="abs" style="left:1120.20px;top:16.9px;width:5.7px;height:5.4px;background:#146655;font-size:4.8px;line-height:5.6px;color:#e8eeea;font-weight:bold;text-align:center">F</span>
<span class="abs" style="left:1126.87px;top:16.9px;width:5.7px;height:5.4px;background:#146655;font-size:4.8px;line-height:5.6px;color:#e8eeea;font-weight:bold;text-align:center">C</span>
<span class="abs" style="left:1133.54px;top:16.9px;width:5.7px;height:5.4px;background:#146655;font-size:4.8px;line-height:5.6px;color:#e8eeea;font-weight:bold;text-align:center">A</span>
<span class="abs" style="left:1140.21px;top:16.9px;width:5.7px;height:5.4px;background:#146655;font-size:4.8px;line-height:5.6px;color:#e8eeea;font-weight:bold;text-align:center">T</span>
<span class="abs" style="left:1146.88px;top:16.9px;width:5.7px;height:5.4px;background:#146655;font-size:4.8px;line-height:5.6px;color:#e8eeea;font-weight:bold;text-align:center">G</span>
<span class="abs" style="left:1153.55px;top:16.9px;width:5.7px;height:5.4px;background:#146655;font-size:4.8px;line-height:5.6px;color:#e8eeea;font-weight:bold;text-align:center">S</span>
<span class="abs" style="left:1160.22px;top:16.9px;width:5.7px;height:5.4px;background:#146655;font-size:4.8px;line-height:5.6px;color:#e8eeea;font-weight:bold;text-align:center">O</span>
<span class="abs" style="left:1166.89px;top:16.9px;width:5.7px;height:5.4px;background:#146655;font-size:4.8px;line-height:5.6px;color:#e8eeea;font-weight:bold;text-align:center">°</span>
<span class="abs" style="left:1173.56px;top:16.9px;width:5.7px;height:5.4px;background:#146655;font-size:4.8px;line-height:5.6px;color:#e8eeea;font-weight:bold;text-align:center">U</span>
<svg class="abs" style="left:1186px;top:16px" width="14" height="7" viewBox="0 0 14 7"><path d="M1.3 5.6 L3.8 2.4 L6.3 5.6Z" fill="#f0f4f2"/><path d="M9.3 1.8 L14.8 6.2 M14.8 1.8 L9.3 6.2" stroke="#f0f4f2" stroke-width=".8"/></svg>
<span class="abs mono" style="left:1119.5px;top:24.80px;color:#e6da3c;font-size:7.15px"> &lt;10 EURW_FSS</span>
<span class="abs mono" style="left:1119.5px;top:32.52px;color:#e6da3c;font-size:7.15px">&lt;WAR EPWW_CTR</span>
<span class="abs mono" style="left:1119.5px;top:40.24px;color:#e6da3c;font-size:7.15px">&lt;HBR LRBB_L_CTR</span>
<span class="abs mono" style="left:1119.5px;top:47.96px;color:#e6da3c;font-size:7.15px">&lt;LZB LZBB_CTR</span>
<span class="abs mono" style="left:1119.5px;top:55.68px;color:#e49ac0;font-size:7.15px">&lt;KFC UKBV_CTR</span>
<span class="abs mono" style="left:1119.5px;top:63.40px;color:#e6da3c;font-size:7.15px">&lt;UCR UKR_CTR</span>
<span class="abs mono" style="left:1119.5px;top:71.12px;color:#e6da3c;font-size:7.15px"> &lt;11 ULLL_CTR</span>
<span class="abs mono" style="left:1119.5px;top:78.84px;color:#e49ac0;font-size:7.15px">&lt;BCR UMMV_CTR</span>
<span class="abs mono" style="left:1119.5px;top:86.56px;color:#e6da3c;font-size:7.15px">&lt;BV2 UKBV_APP</span>
<span class="abs mono" style="left:1119.5px;top:94.28px;color:#e6da3c;font-size:7.15px">&lt;BT1 UKBB_TWR</span>
<span class="abs mono" style="left:1119.5px;top:102.00px;color:#e6da3c;font-size:7.15px"> BWX UKBB_ATIS</span>
<span class="abs mono" style="left:1119.5px;top:109.72px;color:#e6da3c;font-size:7.15px"> ZWX UKKK_ATIS</span>
<span class="abs mono" style="left:1119.5px;top:117.44px;color:#e6da3c;font-size:7.15px">  60 EWG147A</span>
<span class="abs mono" style="left:2.8px;top:606.7px;color:#45d2d2;font-size:7.3px">Coordination</span>
<span class="abs mono" style="left:3.4px;top:615.3px;color:#f0f0f0;font-size:7.3px">122.770</span>
<div class="abs" style="left:1000px;top:545px;width:200px;height:74.5px;background:#1f1f1f"></div>
<div class="abs" style="left:1004.4px;top:552px;width:193px;height:62.4px;border:1px solid #6a6a6a;box-sizing:border-box"></div>
<span class="abs" style="left:1013px;top:564px;font-family:'Liberation Mono',monospace;font-weight:bold;white-space:pre;font-size:7.3px;line-height:9px;color:#35d0c8">Audio For VATSIM V1.8.1</span>
<span class="abs" style="left:1012px;top:579.8px;font-family:'Liberation Mono',monospace;font-weight:bold;white-space:pre;font-size:7.2px;line-height:9px;color:#f0f0f0">ATC Radio:</span>
<span class="abs" style="left:1010.5px;top:592.8px;font-family:'Liberation Mono',monospace;font-weight:bold;white-space:pre;font-size:7.2px;line-height:9px;color:#f0f0f0">Received Freq: 122.770</span>
<span class="abs" style="left:1010.5px;top:604px;font-family:'Liberation Mono',monospace;font-weight:bold;white-space:pre;font-size:7.2px;line-height:9px;color:#f0f0f0">Last Received Callsign: AKO8086</span>
<span class="abs" style="left:1128.6px;top:561.6px;width:12.8px;height:14px;line-height:13px;background:#1f1f1f;border:1px solid #777;box-sizing:border-box;color:#fff;font-size:6px;text-align:center;">+</span>
<span class="abs" style="left:1145px;top:561.6px;width:12.8px;height:14px;line-height:13px;background:#1f1f1f;border:1px solid #777;box-sizing:border-box;color:#fff;font-size:7.5px;text-align:center;">↓</span>
<span class="abs" style="left:1161.3px;top:561.6px;width:12.8px;height:14px;line-height:13px;background:#1f1f1f;border:1px solid #777;box-sizing:border-box;color:#fff;font-size:6px;text-align:center;">_</span>
<span class="abs" style="left:1177.6px;top:561.6px;width:12.6px;height:14px;line-height:13px;background:#8b0000;border:1px solid #8b0000;box-sizing:border-box;color:#fff;font-size:8.5px;text-align:center;">X</span>
<span class="abs" style="left:1079px;top:578.4px;width:19px;height:9.6px;line-height:8.6px;background:#6b6b6b;border:1px solid #6b6b6b;box-sizing:border-box;color:#fff;font-size:7.2px;text-align:center;color:#e8e8e8">TX</span>
<span class="abs" style="left:1103.6px;top:578.4px;width:18.6px;height:9.6px;line-height:8.6px;background:#6b6b6b;border:1px solid #6b6b6b;box-sizing:border-box;color:#fff;font-size:7.2px;text-align:center;color:#e8e8e8">RX</span>
<span class="abs" style="left:1128.6px;top:583px;width:61px;height:14.2px;line-height:13.2px;background:#006a6a;border:1px solid #3a9a9a;box-sizing:border-box;color:#fff;font-size:7.3px;text-align:center;">Disconnect</span>
</div></body></html>
